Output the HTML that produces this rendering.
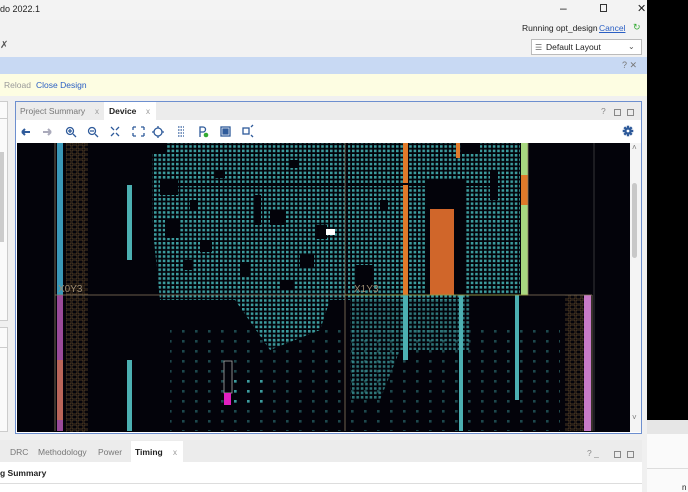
<!DOCTYPE html>
<html><head><meta charset="utf-8"><style>
*{margin:0;padding:0;box-sizing:border-box}
body{width:688px;height:492px;overflow:hidden;background:#f0f0f0;font-family:"Liberation Sans",sans-serif;font-size:9px;color:#222;position:relative}
.a{position:absolute}
.t{position:absolute;white-space:nowrap}
</style></head><body>
<div class="a" style="left:0;top:0;width:647px;height:20px;background:#f3f3f3"></div>
<div class="t" style="left:0;top:4px;font-size:9px">do 2022.1</div>
<div class="t" style="left:560px;top:1px;font-size:12px">–</div>
<div class="a" style="left:600px;top:4px;width:7px;height:8px;border:1px solid #333"></div>
<div class="t" style="left:637px;top:2px;font-size:11px">✕</div>
<div class="a" style="left:0;top:20px;width:647px;height:37px;background:#f2f2f2"></div>
<div class="t" style="left:522px;top:23px;font-size:8.5px">Running opt_design</div>
<div class="t" style="left:599px;top:23px;font-size:8.5px;color:#2a5fc4;text-decoration:underline">Cancel</div>
<div class="t" style="left:633px;top:22px;font-size:9px;color:#3a3">↻</div>
<div class="t" style="left:0;top:40px;font-size:10px;color:#555">✗</div>
<div class="a" style="left:531px;top:39px;width:111px;height:16px;background:#fff;border:1px solid #bbb"></div>
<div class="t" style="left:535px;top:43px;font-size:8px;color:#666">☰</div>
<div class="t" style="left:546px;top:42px;font-size:8.5px">Default Layout</div>
<div class="t" style="left:628px;top:42px;font-size:8px;color:#555">⌄</div>
<div class="a" style="left:0;top:57px;width:647px;height:17px;background:#c8d9f3"></div>
<div class="t" style="left:622px;top:60px;font-size:9px;color:#777">? ✕</div>
<div class="a" style="left:0;top:74px;width:647px;height:22px;background:#fdfde2"></div>
<div class="t" style="left:4px;top:80px;font-size:8.5px;color:#999">Reload</div>
<div class="t" style="left:36px;top:80px;font-size:8.5px;color:#2a5fc4">Close Design</div>
<div class="a" style="left:0;top:101px;width:8px;height:220px;background:#fafafa;border:1px solid #ccc;border-left:none"></div>
<div class="a" style="left:0;top:118px;width:7px;height:1px;background:#ccc"></div>
<div class="a" style="left:0;top:152px;width:4px;height:90px;background:#ccc"></div>
<div class="a" style="left:0;top:327px;width:8px;height:105px;background:#fafafa;border:1px solid #ccc;border-left:none"></div>
<div class="a" style="left:0;top:347px;width:7px;height:1px;background:#ccc"></div>
<div class="a" style="left:15px;top:101px;width:627px;height:333px;border:1px solid #6d8fcf;background:#fff"></div>
<div class="a" style="left:16px;top:102px;width:625px;height:18px;background:#ececec"></div>
<div class="t" style="left:20px;top:106px;font-size:8.5px;color:#777">Project Summary</div>
<div class="t" style="left:95px;top:107px;font-size:8px;color:#999">x</div>
<div class="a" style="left:104px;top:102px;width:52px;height:19px;background:#fff"></div>
<div class="t" style="left:109px;top:106px;font-size:8.5px;font-weight:bold">Device</div>
<div class="t" style="left:146px;top:107px;font-size:8px;color:#999">x</div>
<div class="t" style="left:601px;top:106px;font-size:8.5px;color:#888">?</div>
<div class="a" style="left:614px;top:109px;width:7px;height:7px;border:1px solid #888"></div>
<div class="a" style="left:627px;top:109px;width:7px;height:7px;border:1px solid #888"></div>
<svg class="a" style="left:17px;top:121px" width="620" height="22" viewBox="0 0 620 22">
<g fill="none" stroke="#2e5a9a" stroke-width="1.3">
<path d="M5 11h8M5 11l3-3M5 11l3 3" stroke-width="2"/>
<path d="M26 11h8M34 11l-3-3M34 11l-3 3" stroke="#aab" stroke-width="2"/>
<circle cx="53" cy="10" r="3.5"/><path d="M56 13l3 3M51 10h4M53 8v4"/>
<circle cx="75" cy="10" r="3.5"/><path d="M78 13l3 3M73 10h4"/>
<path d="M94 6l3 3M102 6l-3 3M94 15l3-3M102 15l-3-3"/>
<path d="M116 6h3M116 6v3M127 6h-3M127 6v3M116 15h3M116 15v-3M127 15h-3M127 15v-3"/>
<circle cx="141" cy="11" r="4"/><path d="M141 5v2M141 15v2M135 11h2M145 11h2"/>
<path d="M161 6h6M161 9h6M161 12h6M161 15h6" stroke-dasharray="1.5 1"/>
<path d="M183 16V6h3a2.5 2.5 0 010 5h-3"/>
<circle cx="189" cy="14" r="2.3" fill="#3a3" stroke="none"/>
<rect x="204" y="6" width="9" height="9"/><rect x="206" y="8" width="5" height="5" fill="#2e5a9a"/>
<rect x="226" y="7" width="6" height="6"/><path d="M234 6l2-2M234 14l2 2"/>
</g>
<g transform="translate(611,10)" fill="#2e5a9a"><circle r="3.6"/><rect x="-1.2" y="-5.3" width="2.4" height="10.6"/><rect x="-5.3" y="-1.2" width="10.6" height="2.4"/><rect x="-1.2" y="-5.3" width="2.4" height="10.6" transform="rotate(45)"/><rect x="-1.2" y="-5.3" width="2.4" height="10.6" transform="rotate(-45)"/><circle r="1.4" fill="#fff"/></g>
</svg>
<div class="a" style="left:630px;top:143px;width:11px;height:289px;background:#f4f4f4"></div>
<div class="t" style="left:632px;top:143px;font-size:8px;color:#777">˄</div>
<div class="a" style="left:632px;top:183px;width:5px;height:75px;background:#c8c8c8;border-radius:3px"></div>
<div class="t" style="left:632px;top:413px;font-size:8px;color:#777">˅</div>
<svg class="a" style="left:17px;top:143px" width="613" height="289" viewBox="17 143 613 289">
<defs>
<pattern id="d" x="0" y="0" width="4.4" height="4.4" patternUnits="userSpaceOnUse"><rect width="2.6" height="2.6" fill="#3c9c9e"/></pattern>
<pattern id="s" x="0" y="0" width="13" height="10" patternUnits="userSpaceOnUse"><rect width="2.6" height="2.6" fill="#3c9c9e"/></pattern>
<pattern id="o" width="6" height="5" patternUnits="userSpaceOnUse"><rect width="5" height="4" fill="none" stroke="#7a5a30" stroke-width=".6"/></pattern>
</defs>
<rect x="17" y="143" width="613" height="289" fill="#03030a"/>
<path d="M152 143H520V295H470L460 300H420L400 300H380L370 300H340V300H330L320 330L270 350L235 300H160L150 200Z" fill="url(#d)"/>
<g fill="#03030a">
<rect x="160" y="180" width="18" height="15"/><rect x="165" y="220" width="14" height="18"/>
<rect x="200" y="240" width="12" height="12"/><rect x="270" y="210" width="15" height="15"/>
<rect x="300" y="255" width="14" height="12"/><rect x="315" y="225" width="12" height="14"/>
<rect x="240" y="262" width="10" height="14"/><rect x="152" y="143" width="15" height="10"/>
<rect x="160" y="183" width="340" height="3"/><rect x="345" y="143" width="3" height="160"/>
<rect x="425" y="180" width="40" height="115"/><rect x="462" y="143" width="18" height="10"/>
<rect x="355" y="265" width="18" height="25"/><rect x="140" y="143" width="12" height="160"/>
<rect x="190" y="200" width="8" height="10"/><rect x="215" y="170" width="10" height="8"/>
<rect x="290" y="160" width="8" height="8"/><rect x="255" y="195" width="6" height="30"/>
<rect x="380" y="200" width="8" height="10"/><rect x="490" y="170" width="8" height="30"/>
<rect x="280" y="280" width="14" height="10"/><rect x="183" y="260" width="10" height="10"/>
</g>
<path d="M350 295H470V350H400L380 400H350Z" fill="url(#d)" opacity=".75"/>
<path d="M170 330H560V431H170Z" fill="url(#s)" opacity=".45"/>
<rect x="225" y="375" width="40" height="30" fill="url(#s)"/>
<rect x="57" y="143" width="6" height="152" fill="#3a98b8"/>
<rect x="57" y="295" width="6" height="136" fill="#9a4a9a"/>
<rect x="57" y="360" width="6" height="60" fill="#d07830" opacity=".6"/>
<rect x="66" y="143" width="22" height="289" fill="url(#o)"/>
<rect x="127" y="185" width="5" height="75" fill="#4cb0b2"/>
<rect x="127" y="360" width="5" height="71" fill="#4cb0b2"/>
<rect x="403" y="143" width="5" height="40" fill="#e07a2a"/><rect x="403" y="185" width="5" height="110" fill="#e07a2a"/>
<rect x="403" y="295" width="5" height="65" fill="#4cb0b2"/>
<rect x="456" y="143" width="4" height="15" fill="#e07a2a"/>
<rect x="430" y="209" width="24" height="86" fill="#d0662a"/>
<rect x="521" y="143" width="7" height="152" fill="#a8d880"/>
<rect x="521" y="175" width="7" height="30" fill="#e07a2a"/>
<rect x="459" y="295" width="4" height="136" fill="#4cb0b2"/>
<rect x="515" y="295" width="4" height="105" fill="#4cb0b2"/>
<rect x="565" y="295" width="20" height="136" fill="url(#o)"/>
<rect x="584" y="295" width="7" height="136" fill="#c87ac8"/>
<rect x="224" y="361" width="8" height="32" fill="none" stroke="#aaa" stroke-width=".8"/>
<rect x="224" y="393" width="7" height="12" fill="#e020c0"/>
<rect x="326" y="229" width="9" height="6" fill="#fff"/>
<path d="M55 295H592M345 143V431M55 143V431M592 295V431M528 143V295" stroke="#8a7a60" stroke-width=".8" fill="none"/>
<path d="M345 295H528" stroke="#9aa040" stroke-width=".8"/>
<path d="M594 143V431" stroke="#444" stroke-width=".8"/>
<text x="58" y="292" font-size="10" fill="#9a8a70" font-family="Liberation Sans">X0Y3</text>
<text x="354" y="292" font-size="10" fill="#9a8a70" font-family="Liberation Sans">X1Y3</text>
</svg>
<div class="a" style="left:0;top:440px;width:642px;height:22px;background:#ececec"></div>
<div class="t" style="left:10px;top:447px;font-size:8.5px;color:#777">DRC</div>
<div class="t" style="left:38px;top:447px;font-size:8.5px;color:#777">Methodology</div>
<div class="t" style="left:98px;top:447px;font-size:8.5px;color:#777">Power</div>
<div class="a" style="left:131px;top:441px;width:52px;height:22px;background:#fff"></div>
<div class="t" style="left:135px;top:447px;font-size:8.5px;font-weight:bold">Timing</div>
<div class="t" style="left:173px;top:448px;font-size:8px;color:#999">x</div>
<div class="t" style="left:587px;top:448px;font-size:8.5px;color:#888">? _</div>
<div class="a" style="left:614px;top:451px;width:7px;height:7px;border:1px solid #888"></div>
<div class="a" style="left:627px;top:451px;width:7px;height:7px;border:1px solid #888"></div>
<div class="a" style="left:0;top:462px;width:642px;height:30px;background:#fff"></div>
<div class="t" style="left:0;top:468px;font-size:8.5px;font-weight:bold">g Summary</div>
<div class="a" style="left:0;top:483px;width:642px;height:1px;background:#ddd"></div>
<div class="a" style="left:647px;top:0;width:41px;height:420px;background:#000"></div>
<div class="a" style="left:647px;top:420px;width:41px;height:14px;background:#e6e6e6"></div>
<div class="a" style="left:647px;top:434px;width:41px;height:58px;background:#fafafa"></div>
<div class="a" style="left:647px;top:468px;width:41px;height:1px;background:#ddd"></div>
<div class="t" style="left:682px;top:483px;font-size:8px">n</div>
</body></html>
